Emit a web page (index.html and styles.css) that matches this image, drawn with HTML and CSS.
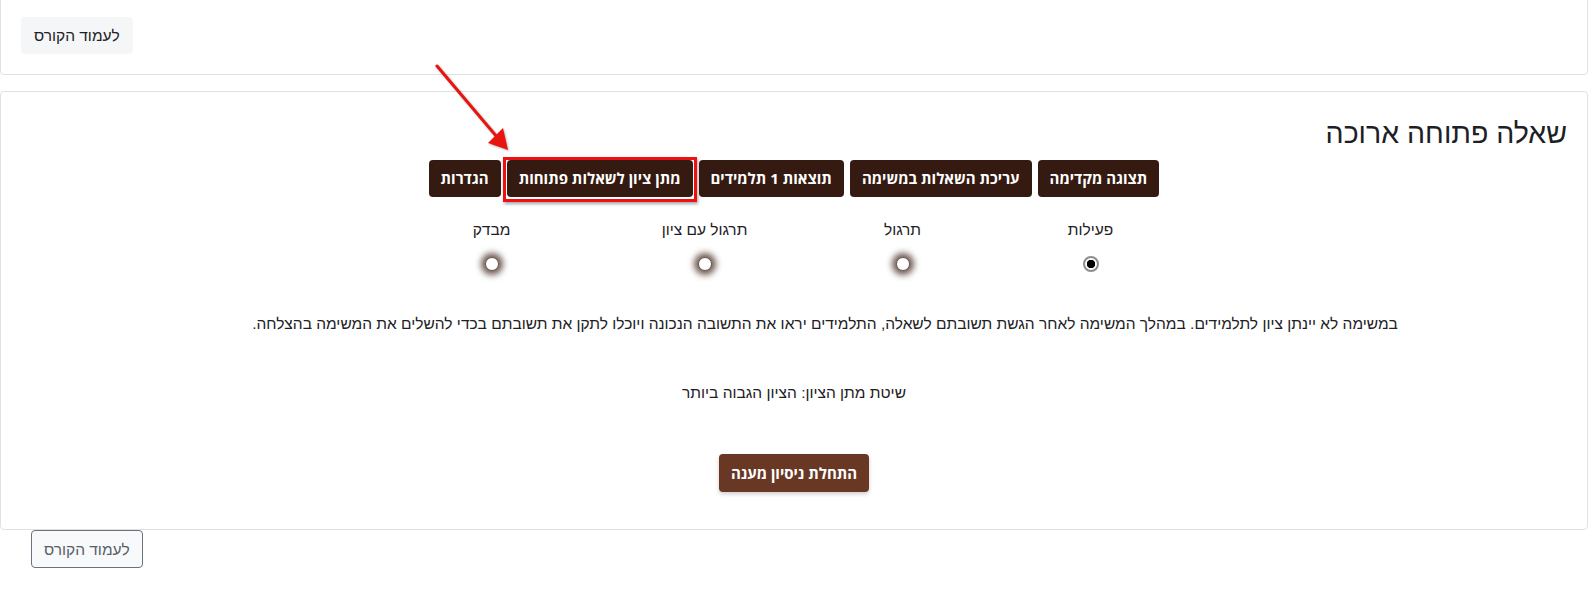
FILE: index.html
```html
<!DOCTYPE html>
<html lang="he" dir="rtl">
<head>
<meta charset="utf-8">
<title>שאלה פתוחה ארוכה</title>
<link rel="stylesheet" href="styles.css">
</head>
<body>
<div class="page">
  <section class="card card-top">
    <div class="end-row">
      <a class="btn btn-light" href="#">לעמוד הקורס</a>
    </div>
  </section>

  <section class="card card-main">
    <h2 class="title">שאלה פתוחה ארוכה</h2>

    <nav class="tabs">
      <a class="btn btn-dark" href="#">תצוגה מקדימה</a>
      <a class="btn btn-dark" href="#">עריכת השאלות במשימה</a>
      <a class="btn btn-dark" href="#">תוצאות 1 תלמידים</a>
      <a class="btn btn-dark highlighted" href="#">מתן ציון לשאלות פתוחות</a>
      <a class="btn btn-dark" href="#">הגדרות</a>
    </nav>

    <div class="modes">
      <label class="mode mode-1">
        <span class="mode-label">פעילות</span>
        <span class="radio radio-checked"></span>
      </label>
      <label class="mode mode-2">
        <span class="mode-label">תרגול</span>
        <span class="radio radio-glow"></span>
      </label>
      <label class="mode mode-3">
        <span class="mode-label">תרגול עם ציון</span>
        <span class="radio radio-glow"></span>
      </label>
      <label class="mode mode-4">
        <span class="mode-label">מבדק</span>
        <span class="radio radio-glow"></span>
      </label>
    </div>

    <p class="description">במשימה לא יינתן ציון לתלמידים. במהלך המשימה לאחר הגשת תשובתם לשאלה, התלמידים יראו את התשובה הנכונה ויוכלו לתקן את תשובתם בכדי להשלים את המשימה בהצלחה.</p>

    <p class="grade-method">שיטת מתן הציון: הציון הגבוה ביותר</p>

    <div class="start-row">
      <a class="btn btn-start" href="#">התחלת ניסיון מענה</a>
    </div>
  </section>

  <div class="end-row bottom-row">
    <a class="btn btn-outline" href="#">לעמוד הקורס</a>
  </div>

  <svg class="annotation-arrow" width="90" height="100" viewBox="0 0 90 100" aria-hidden="true">
    <line x1="7" y1="7" x2="67" y2="78" stroke="#e8140f" stroke-width="3" stroke-linecap="round"/>
    <polygon points="78,91 58,84 73,69" fill="#e8140f"/>
  </svg>
</div>
</body>
</html>
```

FILE: styles.css
```css
* {
  box-sizing: border-box;
}

html, body {
  margin: 0;
  padding: 0;
  background: #ffffff;
}

body {
  font-family: "Liberation Sans", "Open Sans", sans-serif;
  font-size: 15.5px;
  line-height: 22.5px;
  color: #1d2125;
}

.page {
  position: relative;
  width: 1588px;
  margin-left: 0;
  margin-right: auto;
}

.card {
  border: 1px solid #dee2e6;
  border-radius: 4px;
  background: #fff;
  padding: 20px;
}

.card-top {
  margin-top: -4px;
}

.card-main {
  margin-top: 16px;
  padding-bottom: 37px;
}

.end-row {
  display: flex;
  justify-content: flex-end;
}

.bottom-row {
  padding-left: 31px;
  margin-top: 0;
}

.btn {
  display: inline-block;
  padding: 6px 12px;
  border: 1px solid transparent;
  border-radius: 4px;
  font-size: 15.5px;
  line-height: 23px;
  text-decoration: none;
  white-space: nowrap;
}

.btn-light {
  background: #f5f6f8;
  color: #1d2125;
}

.btn-outline {
  background: #f8f9fa;
  border-color: #6a737b;
  color: #56606a;
  padding-top: 7px;
  padding-bottom: 6px;
}

.btn-dark {
  font-family: "Open Sans", "Liberation Sans", sans-serif;
  font-size: 15px;
  background: #341a10;
  color: #ffffff;
  font-weight: 700;
  padding-left: 11px;
  padding-right: 11px;
  position: relative;
}

.btn-start {
  font-family: "Open Sans", "Liberation Sans", sans-serif;
  font-size: 15px;
  background: #683824;
  color: #ffffff;
  font-weight: 700;
  padding: 7px 11px 6px;
  box-shadow: 0 2px 4px rgba(0, 0, 0, 0.2);
}

.title {
  margin: 4px 0 0;
  font-size: 28.5px;
  font-weight: 400;
  line-height: 34px;
}

.tabs {
  display: flex;
  justify-content: center;
  gap: 6px;
  margin-top: 10px;
}

.highlighted::after {
  content: "";
  position: absolute;
  top: -4px;
  bottom: -6px;
  left: -5px;
  right: -5px;
  border: 3px solid #ee1111;
  box-shadow: 1px 2px 3px rgba(0, 0, 0, 0.35);
  pointer-events: none;
}

.modes {
  display: flex;
  justify-content: center;
  padding-right: 21px;
  margin-top: 22px;
}

.mode {
  display: flex;
  flex-direction: column;
  align-items: center;
}

.mode-1 { width: 188px; }
.mode-2 { width: 188px; }
.mode-3 { width: 208px; }
.mode-4 { width: 218px; }

.mode-label {
  display: block;
}

.radio {
  display: block;
  width: 14px;
  height: 14px;
  border-radius: 50%;
  margin-top: 15px;
}

.radio-checked {
  width: 16px;
  height: 16px;
  margin-top: 14px;
  background: radial-gradient(circle, #000 0 4px, #fff 4.5px 100%);
  border: 2px solid #8d8d8d;
}

.radio-glow {
  background: #fff;
  border: 1px solid #6a574f;
  box-shadow: 0 0 6px 4px rgba(75, 50, 40, 0.8);
}

.description {
  margin: 41px 0 0;
  text-align: center;
  padding-left: 62px;
}

.grade-method {
  margin: 47px 0 0;
  text-align: center;
}

.start-row {
  display: flex;
  justify-content: center;
  margin-top: 49px;
}

.annotation-arrow {
  position: absolute;
  left: 430px;
  top: 63px;
  filter: drop-shadow(1px 1px 1px rgba(0, 0, 0, 0.3));
}
```
